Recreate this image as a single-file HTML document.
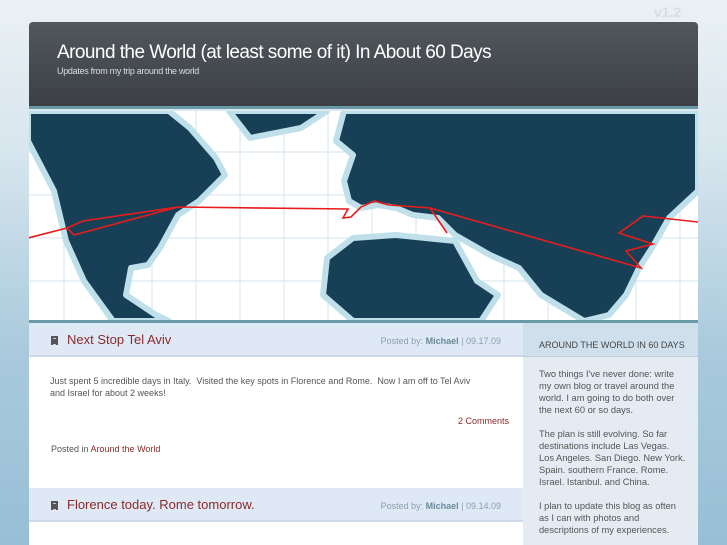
<!DOCTYPE html>
<html><head><meta charset="utf-8"><style>
*{margin:0;padding:0;box-sizing:border-box}
body{width:727px;height:545px;overflow:hidden;font-family:"Liberation Sans",sans-serif;background:linear-gradient(#eaf1f4 0px,#d8e6ee 150px,#a9cadc 350px,#98bfd5 545px);position:relative}
.v{position:absolute;left:654px;top:4px;color:#d3dde2;font-size:14px;font-weight:bold}
.hdr{position:absolute;left:29px;top:22px;width:669px;height:87px;background:linear-gradient(#51575d,#3c4045);border-radius:4px 4px 0 0;border-bottom:3px solid #6a9aa7}
.hdr h1{position:absolute;left:28px;top:20px;color:#fff;font-weight:normal;font-size:19px;letter-spacing:-0.55px}
.hdr p{position:absolute;left:28px;top:44px;color:#d8dde0;font-size:9px;letter-spacing:-0.3px}
.map{position:absolute;left:29px;top:111px;width:669px;height:209px;background:#fff}
.bar{position:absolute;left:29px;top:320px;width:669px;height:3px;background:#6a9aa7}
.main{position:absolute;left:29px;top:323px;width:494px;height:222px;background:#fff}
.side{position:absolute;left:523px;top:323px;width:175px;height:222px;background:#e4ebf3}
.ph{position:absolute;left:0;width:494px;height:34px;background:#dfe9f5;border-bottom:2px solid #cdd9e6}
.ph .ic{position:absolute;left:22px;top:13px;width:7px;height:9px;background:#555;border:1px solid #555;}
.ph .ic:after{content:"";position:absolute;left:1px;top:1px;width:3px;height:5px;border-top:1px solid #ccc;border-bottom:1px solid #ccc}
.ph h2{position:absolute;left:38px;top:9px;font-weight:normal;color:#8a2a2a;font-size:13px}
.ph .m{position:absolute;right:22px;top:13px;font-size:9px;color:#8aa0b0}
.ph .m b{color:#6a8a9a}
.t{position:absolute;font-size:9px;color:#555;line-height:12px}
a{color:#8a2a2a;text-decoration:none}
.sh{position:absolute;left:0;top:0;width:175px;height:34px;background:#cfe0ec;border-bottom:1px dotted #a9bfd0;font-size:9px;color:#444;padding:17px 0 0 16px}
.st{position:absolute;left:16px;font-size:9.3px;color:#555;line-height:12px;white-space:nowrap}
</style></head><body>
<div class="v">v1.2</div>
<div class="hdr"><h1>Around the World (at least some of it) In About 60 Days</h1><p>Updates from my trip around the world</p></div>
<div class="map"><svg width="669" height="209" viewBox="29 111 669 209">
<g stroke="#d2e4ee" stroke-width="1">
<path d="M29 152H698M29 195H698M29 238H698M29 281H698M64 111V320M108 111V320M152 111V320M196 111V320M240 111V320M284 111V320M328 111V320M372 111V320M416 111V320M460 111V320M504 111V320M548 111V320M592 111V320M636 111V320M680 111V320"/></g>
<g fill="#173f56" stroke="#bfe0ea" stroke-width="6" stroke-linejoin="round">
<path d="M28 141L28 111L169 111L190 128L216 158L225 175L199 201L178 215L160 248L148 265L131 268L126 295L156 315L169 321L113 321L84 281L66 241L54 191Z"/>
<path d="M229 111L327 111L301 128L250 138Z"/>
<path d="M336 141L344 111L698 111L698 191L669 218L652 248L639 268L626 295L609 315L584 321L541 295L519 268L490 255L455 235L438 218L413 215L396 208L378 205L361 208L349 201L344 181L353 155Z"/>
<path d="M327 258L353 238L396 235L455 241L477 281L498 295L481 321L353 321L323 295Z"/>
</g>
<g fill="none" stroke="#e81c1c" stroke-width="1.6">
<path d="M28 238L67 228L83 221L178 207L74 235L67 228M178 207L348 209L343 218L351 217L361 207L374 201L389 205L430 208L447 233L430 208L641 268L626 251L653 244L619 233L643 216L698 222"/></g>
</svg></div>
<div class="bar"></div>
<div class="main">
<div class="ph" style="top:0"><div class="ic"></div><h2>Next Stop Tel Aviv</h2><div class="m">Posted by: <b>Michael</b> | 09.17.09</div></div>
<div class="t" style="left:21px;top:52px">Just spent 5 incredible days in Italy.&nbsp; Visited the key spots in Florence and Rome.&nbsp; Now I am off to Tel Aviv<br>and Israel for about 2 weeks!</div>
<div class="t" style="right:14px;top:92px"><a>2 Comments</a></div>
<div class="t" style="left:22px;top:120px">Posted in <a>Around the World</a></div>
<div class="ph" style="top:165px"><div class="ic"></div><h2>Florence today. Rome tomorrow.</h2><div class="m">Posted by: <b>Michael</b> | 09.14.09</div></div>
</div>
<div class="side"><div class="sh">AROUND THE WORLD IN 60 DAYS</div>
<div class="st" style="top:45px">Two things I've never done: write<br>my own blog or travel around the<br>world. I am going to do both over<br>the next 60 or so days.</div>
<div class="st" style="top:105px">The plan is still evolving. So far<br>destinations include Las Vegas.<br>Los Angeles. San Diego. New York.<br>Spain. southern France. Rome.<br>Israel. Istanbul. and China.</div>
<div class="st" style="top:177px">I plan to update this blog as often<br>as I can with photos and<br>descriptions of my experiences.</div>
</div>
</body></html>
